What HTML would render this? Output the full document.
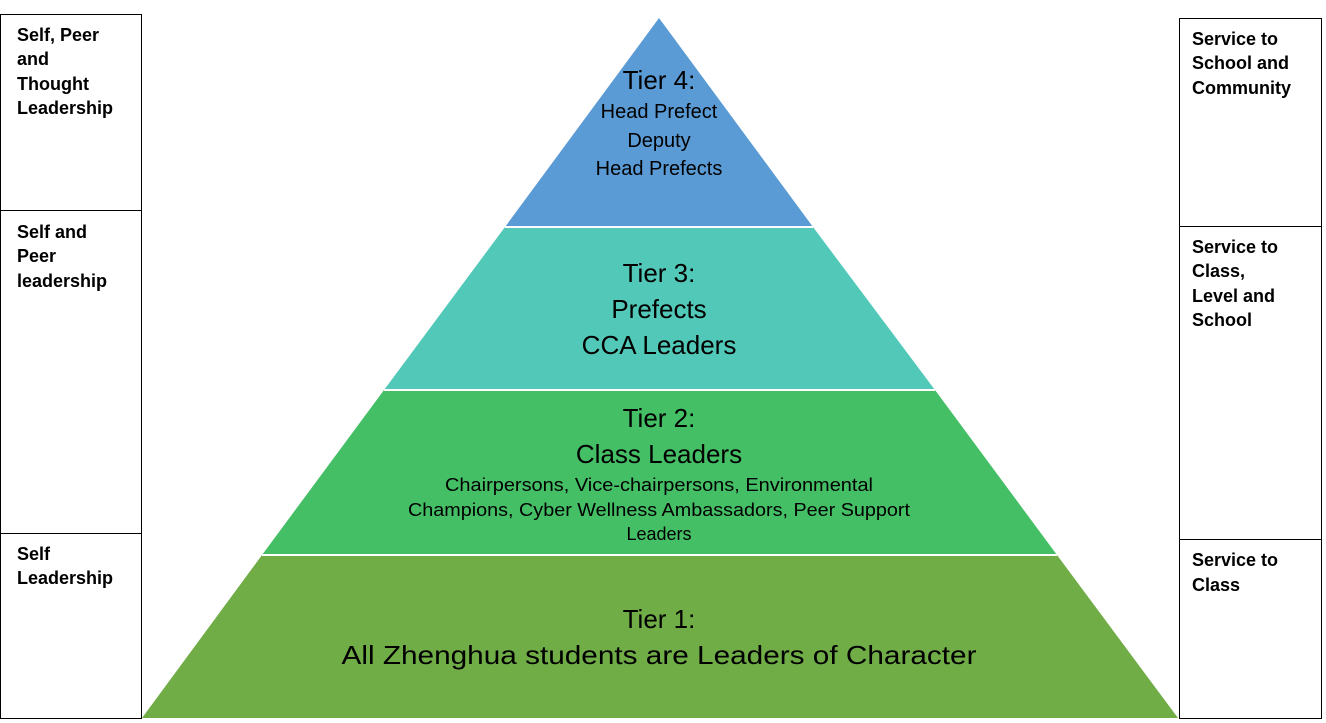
<!DOCTYPE html>
<html><head><meta charset="utf-8"><style>
html,body{margin:0;padding:0;background:#fff;width:1326px;height:723px;overflow:hidden}
svg{display:block}
text{font-family:"Liberation Sans",sans-serif}
.b{font-weight:bold;font-size:18px;fill:#000}
.t{fill:#000;text-anchor:middle}
</style></head><body>
<svg width="1326" height="723" viewBox="0 0 1326 723">
<!-- left boxes -->
<g fill="none" stroke="#000" stroke-width="1">
<rect x="0.5" y="14.5" width="141" height="196"/>
<rect x="0.5" y="210.5" width="141" height="323"/>
<rect x="0.5" y="533.5" width="141" height="185"/>
<rect x="1179.5" y="18.5" width="142" height="208"/>
<rect x="1179.5" y="226.5" width="142" height="313"/>
<rect x="1179.5" y="539.5" width="142" height="179"/>
</g>
<g class="b">
<text x="17" y="41">Self, Peer</text>
<text x="17" y="65">and</text>
<text x="17" y="90">Thought</text>
<text x="17" y="114">Leadership</text>
<text x="17" y="238">Self and</text>
<text x="17" y="262">Peer</text>
<text x="17" y="287">leadership</text>
<text x="17" y="560">Self</text>
<text x="17" y="584">Leadership</text>
<text x="1192" y="45">Service to</text>
<text x="1192" y="69">School and</text>
<text x="1192" y="94">Community</text>
<text x="1192" y="253">Service to</text>
<text x="1192" y="277">Class,</text>
<text x="1192" y="302">Level and</text>
<text x="1192" y="326">School</text>
<text x="1192" y="566">Service to</text>
<text x="1192" y="591">Class</text>
</g>
<!-- pyramid -->
<polygon points="659,18 813,227 505,227" fill="#5b9bd5"/>
<polygon points="505,227 813,227 935,390 384,390" fill="#52c9b8"/>
<polygon points="384,390 935,390 1057,555 262,555" fill="#45bf65"/>
<polygon points="262,555 1057,555 1178,718 142,718" fill="#70ad47"/>
<g stroke="#fff" stroke-width="2">
<line x1="505" y1="227" x2="813" y2="227"/>
<line x1="384" y1="390" x2="935" y2="390"/>
<line x1="262" y1="555" x2="1057" y2="555"/>
</g>
<g class="t">
<text x="659" y="89" font-size="26">Tier 4:</text>
<text x="659" y="118" font-size="20">Head Prefect</text>
<text x="659" y="147" font-size="20">Deputy</text>
<text x="659" y="175" font-size="20">Head Prefects</text>
<text x="659" y="282" font-size="26">Tier 3:</text>
<text x="659" y="318" font-size="26">Prefects</text>
<text x="659" y="354" font-size="26">CCA Leaders</text>
<text x="659" y="427" font-size="26">Tier 2:</text>
<text x="659" y="463" font-size="26">Class Leaders</text>
<text x="659" y="491" font-size="18" textLength="428" lengthAdjust="spacingAndGlyphs">Chairpersons, Vice-chairpersons, Environmental</text>
<text x="659" y="516" font-size="18" textLength="502" lengthAdjust="spacingAndGlyphs">Champions, Cyber Wellness Ambassadors, Peer Support</text>
<text x="659" y="540" font-size="18">Leaders</text>
<text x="659" y="628" font-size="26">Tier 1:</text>
<text x="659" y="664" font-size="26" textLength="635" lengthAdjust="spacingAndGlyphs">All Zhenghua students are Leaders of Character</text>
</g>
</svg>
</body></html>
